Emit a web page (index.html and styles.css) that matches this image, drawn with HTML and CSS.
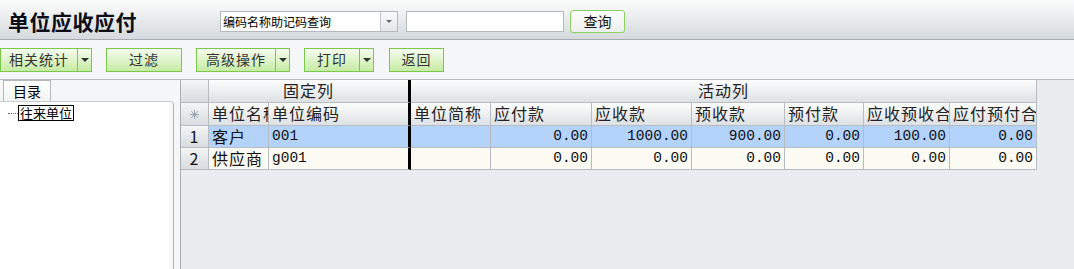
FILE: index.html
```html
<!DOCTYPE html>
<html lang="zh-CN">

<head>
  <meta charset="UTF-8">
  <meta name="viewport" content="width=device-width, initial-scale=1.0">
  <link rel="stylesheet" href="styles.css">
</head>

<body>
  <div class="topbar">
    <h1 class="title">单位应收应付</h1>
    <div class="combo">
      <span class="combo-text">编码名称助记码查询</span>
      <span class="combo-btn"><i class="tri"></i></span>
    </div>
    <input class="search" type="text">
    <button class="btn-query">查询</button>
  </div>

  <div class="toolbar">
    <div class="tbtn w-stat"><span class="label">相关统计</span><span class="drop"><i class="tri"></i></span></div>
    <div class="tbtn w-filter"><span class="label">过滤</span></div>
    <div class="tbtn w-adv"><span class="label">高级操作</span><span class="drop"><i class="tri"></i></span></div>
    <div class="tbtn w-print"><span class="label">打印</span><span class="drop"><i class="tri"></i></span></div>
    <div class="tbtn w-back"><span class="label">返回</span></div>
  </div>

  <div class="main">
    <div class="side">
      <div class="tabs"><span class="tab">目录</span></div>
      <div class="tree">
        <div class="tree-item"><span class="dots"></span><span class="node">往来单位</span></div>
      </div>
    </div>

    <div class="grid-wrap">
      <div class="grid">
        <!-- group header -->
        <div class="hd rh"></div>
        <div class="hd group fixed">固定列</div>
        <div class="hd group active">活动列</div>

        <!-- column header -->
        <div class="hd rh star">
          <svg width="9" height="9" viewBox="0 0 9 9">
            <g stroke="#9ba3ab" stroke-width="1">
              <line x1="4.5" y1="0" x2="4.5" y2="9" />
              <line x1="0" y1="4.5" x2="9" y2="4.5" />
              <line x1="1.3" y1="1.3" x2="7.7" y2="7.7" />
              <line x1="7.7" y1="1.3" x2="1.3" y2="7.7" />
            </g>
          </svg>
        </div>
        <div class="hd clip">单位名称</div>
        <div class="hd split">单位编码</div>
        <div class="hd">单位简称</div>
        <div class="hd">应付款</div>
        <div class="hd">应收款</div>
        <div class="hd">预收款</div>
        <div class="hd">预付款</div>
        <div class="hd clip">应收预收合计</div>
        <div class="hd clip">应付预付合计</div>

        <!-- rows -->
        <div class="rh">1</div>
        <div class="cell sel">客户</div>
        <div class="cell sel mono split">001</div>
        <div class="cell sel"></div>
        <div class="cell sel num">0.00</div>
        <div class="cell sel num">1000.00</div>
        <div class="cell sel num">900.00</div>
        <div class="cell sel num">0.00</div>
        <div class="cell sel num">100.00</div>
        <div class="cell sel num">0.00</div>

        <div class="rh">2</div>
        <div class="cell">供应商</div>
        <div class="cell mono split">g001</div>
        <div class="cell"></div>
        <div class="cell num">0.00</div>
        <div class="cell num">0.00</div>
        <div class="cell num">0.00</div>
        <div class="cell num">0.00</div>
        <div class="cell num">0.00</div>
        <div class="cell num">0.00</div>
      </div>
    </div>
  </div>
</body>

</html>
```

FILE: styles.css
```css
body {
  margin: 0;
  padding: 0;
  height: 269px;
  overflow: hidden;
  background: #f5f6f8;
  color: #111;
  font-family: "Noto Sans CJK SC", "Liberation Sans", sans-serif;
}

.tri {
  display: block;
  width: 0;
  height: 0;
  border-left: 4px solid transparent;
  border-right: 4px solid transparent;
  border-top: 4px solid #333;
}

/* top bar */
.topbar {
  display: flex;
  align-items: center;
  height: 40px;
  box-sizing: border-box;
  padding: 3px 0 0 8px;
  background: linear-gradient(#fbfcfc, #d5dade);
  border-bottom: 1px solid #a6acb2;
}

.title {
  width: 212px;
  margin: 0;
  font-size: 21px;
  font-weight: bold;
  line-height: 26px;
  letter-spacing: 0.5px;
  color: #0d0d18;
}

.combo {
  display: flex;
  width: 178px;
  height: 21px;
  box-sizing: border-box;
  border: 1px solid #b3b8bd;
  background: #fff;
}

.combo-text {
  flex: 1;
  padding-left: 2px;
  font-size: 12px;
  line-height: 19px;
  color: #000;
}

.combo-btn {
  display: flex;
  align-items: center;
  justify-content: center;
  width: 16px;
  border-left: 1px solid #c4c8cc;
  background: linear-gradient(#f9fafb, #e3e6e9);
}

.combo-btn .tri {
  border-left-width: 3px;
  border-right-width: 3px;
  border-top: 3px solid #666;
}

.search {
  width: 158px;
  height: 21px;
  margin: 0 0 0 8px;
  padding: 0;
  box-sizing: border-box;
  border: 1px solid #b3b8bd;
  background: #fff;
}

.btn-query {
  width: 55px;
  height: 23px;
  margin-left: 6px;
  padding: 0;
  box-sizing: border-box;
  border: 1px solid #8ccf5e;
  border-radius: 3px;
  background: linear-gradient(#fefefe, #eceeee);
  font-family: inherit;
  font-size: 14px;
  line-height: 20px;
  color: #111;
}

/* toolbar */
.toolbar {
  display: flex;
  gap: 14px;
  height: 40px;
  box-sizing: border-box;
  padding-top: 8px;
  border-bottom: 1px solid #b8bcc0;
}

.tbtn {
  display: flex;
  height: 24px;
  box-sizing: border-box;
  border: 1px solid #7cc84a;
  background: linear-gradient(#f6fcef, #c6eba3);
  font-size: 14px;
  line-height: 21px;
  letter-spacing: 1px;
  color: #333;
}

.tbtn .label {
  flex: 1;
  text-align: center;
}

.tbtn .drop {
  display: flex;
  align-items: center;
  justify-content: center;
  width: 13px;
  border-left: 1px solid #7cc84a;
}

.w-stat { width: 92px; }
.w-filter { width: 76px; }
.w-adv { width: 94px; }
.w-print { width: 70px; }
.w-back { width: 55px; margin-left: 1px; }

/* main area */
.main {
  display: flex;
  height: 189px;
}

.side {
  display: flex;
  flex-direction: column;
  width: 174px;
}

.tabs {
  height: 21px;
  padding-left: 3px;
}

.tab {
  display: block;
  width: 48px;
  height: 21px;
  box-sizing: border-box;
  border: 1px solid #b4b8bc;
  border-bottom: none;
  background: linear-gradient(#ffffff, #f2f3f4);
  font-size: 14px;
  line-height: 20px;
  text-align: center;
  color: #000;
}

.tree {
  flex: 1;
  background: #fff;
  border-top: 1px solid #c9cdd1;
  border-right: 1px solid #b0b4b8;
  border-top-right-radius: 4px;
  box-shadow: inset -3px 0 0 #f7f7f7;
}

.tree-item {
  display: flex;
  align-items: center;
  margin-top: 3px;
  padding-left: 8px;
}

.dots {
  width: 10px;
  border-top: 1px dotted #666;
}

.node {
  height: 16px;
  box-sizing: border-box;
  padding: 0 1px;
  border: 1px solid #000;
  font-size: 13px;
  line-height: 13px;
  color: #000;
}

/* data grid */
.grid-wrap {
  flex: 1;
  margin-left: 6px;
  border-left: 1px solid #a8adb2;
  background: #eaedf0;
}

.grid {
  display: grid;
  grid-template-columns: 28px 60px 142px 80px 101px 100px 93px 79px 86px 87px;
  grid-template-rows: 23px 23px 22px 22px;
  width: 856px;
  font-size: 16px;
  letter-spacing: 1px;
}

.grid > div {
  box-sizing: border-box;
  border-right: 1px solid #b6bcc2;
  border-bottom: 1px solid #b6bcc2;
  white-space: nowrap;
}

.grid > .clip {
  overflow: hidden;
}

.hd {
  padding: 0 3px;
  line-height: 21px;
  background: linear-gradient(#fdfdfd, #dde1e4);
  color: #222;
}

.group {
  text-align: center;
}

.fixed {
  grid-column: span 2;
}

.active {
  grid-column: span 7;
}

.grid > .fixed,
.grid > .split {
  border-right: 3px solid #000;
}

.rh {
  text-align: center;
  line-height: 21px;
  background: linear-gradient(#f4f5f6, #d8dce0);
  color: #111;
}

.star {
  display: flex;
  align-items: center;
  justify-content: center;
}

.cell {
  padding: 0 3px;
  line-height: 21px;
  background: #fbfbf4;
  color: #111;
}

.cell.sel {
  background: #b3d3fb;
}

.mono,
.num {
  font-family: "Liberation Mono", monospace;
  font-size: 14.5px;
  letter-spacing: 0;
}

.num {
  text-align: right;
}
```
